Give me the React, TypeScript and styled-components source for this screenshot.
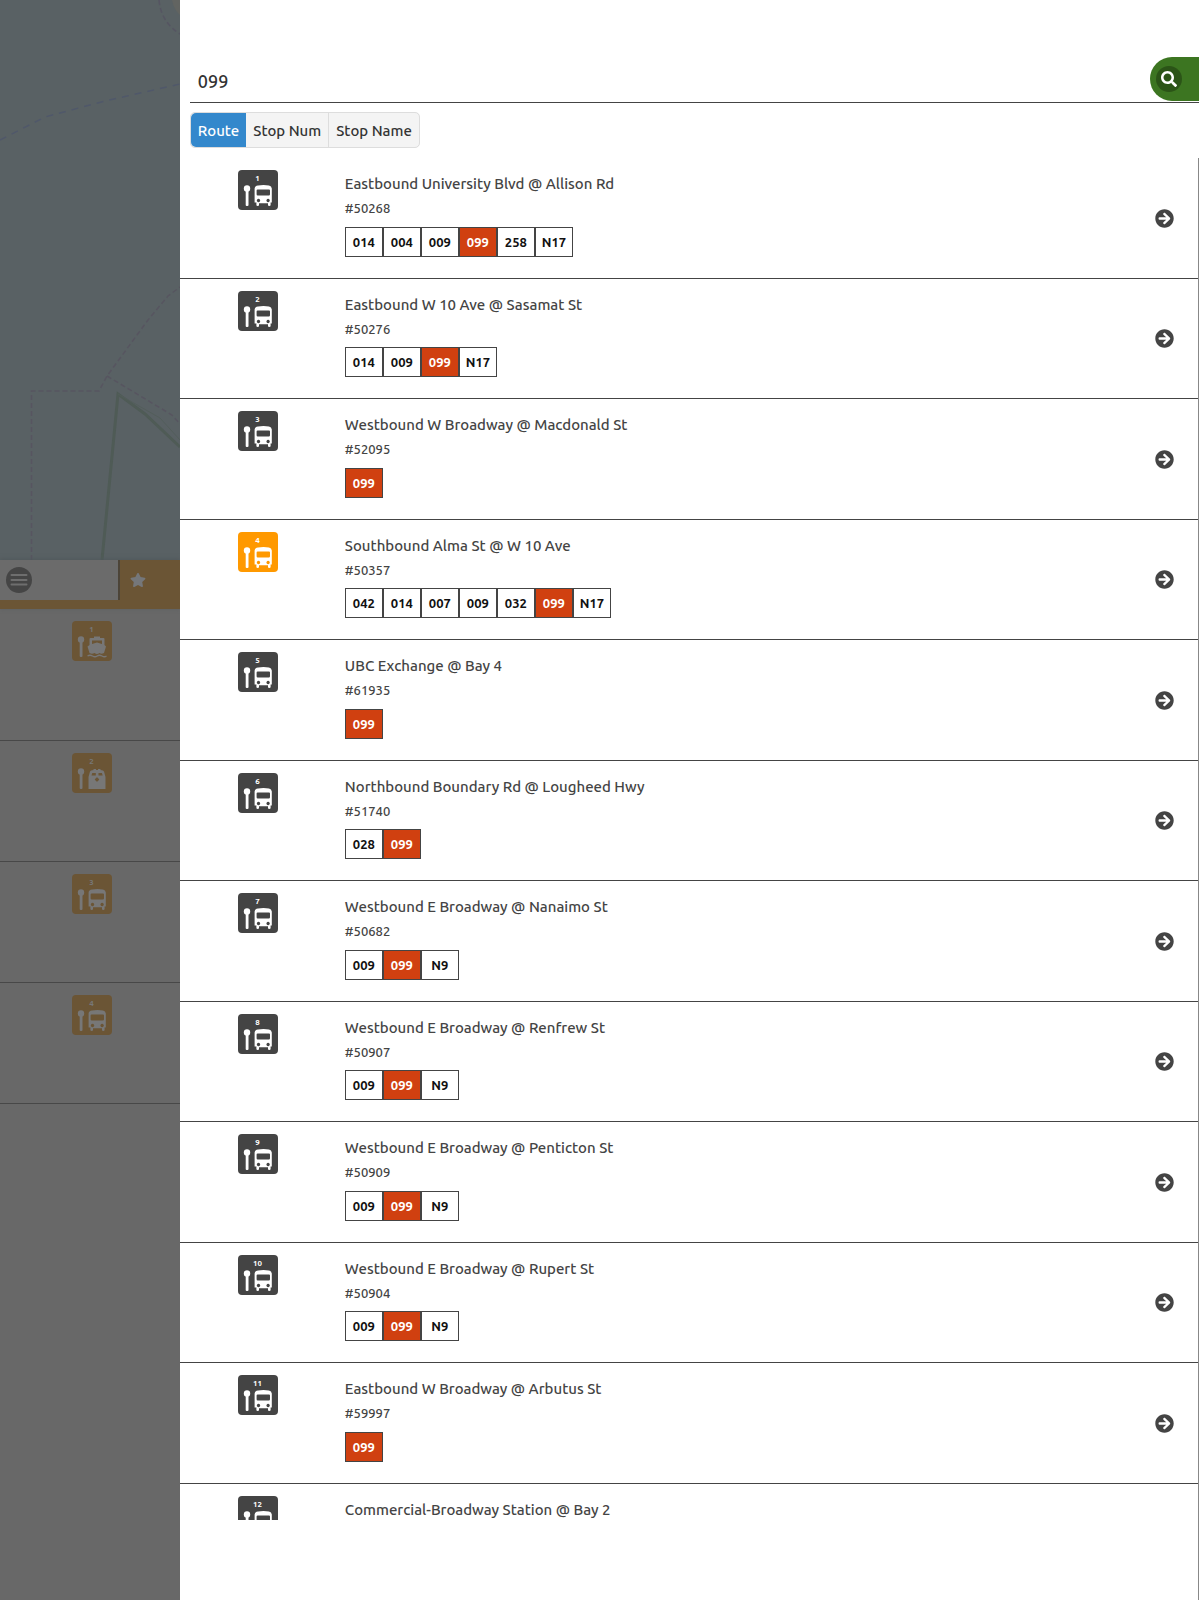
import React, { useState } from "react";
import styled, { createGlobalStyle } from "styled-components";
import { FaArrowCircleRight, FaSearch, FaStar } from "react-icons/fa";

const GlobalStyle = createGlobalStyle`
  *, *::before, *::after { box-sizing: border-box; }
  html, body, #root { height: 100%; }
  body {
    margin: 0;
    background: #fff;
    color: #444;
    font-family: Ubuntu, "Noto Sans", "Open Sans", sans-serif;
    font-weight: 500;
  }
  ul { margin: 0; padding: 0; list-style: none; }
  button, input { font: inherit; }
`;

const Screen = styled.div`
  display: grid;
  grid-template-columns: 15% 1fr;
  grid-template-rows: 100%;
  height: 100vh;
  overflow: hidden;
`;

/* ---------- dimmed favourites behind the search drawer ---------- */

const Backdrop = styled.aside`
  display: flex;
  flex-direction: column;
  min-width: 0;
  overflow: hidden;
  background: #686868;
`;

const MapArea = styled.div`
  flex: 0 0 35%;
  background: #596164;
  overflow: hidden;
`;

const MapDrawing = styled.svg`
  display: block;
`;

const BackdropTabs = styled.nav`
  flex: none;
  display: flex;
  height: 49px;
  border-bottom: 9px solid #6b5535;
  background: #6b5535;
  box-shadow: 0 -1px 4px #50585b;
`;

const MenuTab = styled.button`
  flex: none;
  width: 120px;
  padding: 0 0 0 6px;
  display: flex;
  align-items: center;
  border: 0;
  border-right: 2px solid #4c4438;
  background: #6b6b6b;
`;

const FavouriteTab = styled.button`
  padding: 0 10px;
  border: 0;
  background: transparent;
  color: #75777a;
  line-height: 0;
`;

const FavouriteRow = styled.li<{ $tall?: boolean }>`
  display: flex;
  height: ${(p) => (p.$tall ? 132 : 121)}px;
  padding: 12px 0 0 72px;
  border-bottom: 1px solid #484848;
`;

/* ---------- search drawer ---------- */

const Drawer = styled.main`
  display: flex;
  flex-direction: column;
  min-width: 0;
  min-height: 0;
  padding-top: 57px;
  background: #fff;
`;

const SearchBar = styled.form`
  flex: none;
  display: flex;
  align-items: flex-start;
  height: 46px;
  margin-left: 10px;
  border-bottom: 1px solid #444;
`;

const SearchInput = styled.input`
  flex: 1;
  min-width: 0;
  height: 44px;
  padding: 3px 8px 0;
  border: 0;
  outline: 0;
  background: transparent;
  color: #333;
  font-size: 18px;
`;

const SearchButton = styled.button`
  display: flex;
  align-items: center;
  width: 49px;
  height: 44px;
  padding: 0 6px;
  border: 0;
  border-radius: 22px 0 0 22px;
  background: #3c7521;
  color: #fff;
`;

const SearchBadge = styled.span`
  display: grid;
  place-items: center;
  width: 26px;
  height: 26px;
  border-radius: 50%;
  background: #2b5417;
`;

const Modes = styled.fieldset`
  display: flex;
  align-self: flex-start;
  flex: none;
  height: 36px;
  margin: 9px 0 10px 10px;
  padding: 0;
  border: 1px solid #ddd;
  border-radius: 5px;
  overflow: hidden;
  background: #f4f4f4;
`;

const Mode = styled.label`
  display: flex;
  align-items: center;
  padding: 0 7px;
  color: #333;
  font-size: 15px;
  & + & { border-left: 1px solid #ddd; }
  &:has(input:checked) {
    margin: -1px 0 -1px -1px;
    padding-left: 8px;
    background: #3388cc;
    color: #fff;
  }
  &:has(input:checked) + & { border-left: 0; }
`;

const ModeInput = styled.input`
  appearance: none;
  width: 0;
  height: 0;
  margin: 0;
`;

/* The right rule runs on below the list, which itself stops short of the edge. */
const ResultsFrame = styled.section`
  flex: 1;
  display: flex;
  flex-direction: column;
  min-height: 0;
  padding-bottom: 80px;
  border-right: 1px solid #888;
`;

const Results = styled.ul`
  flex: 1;
  min-height: 0;
  overflow: hidden;
`;

const StopRow = styled.li`
  display: grid;
  grid-template-columns: 157px 1fr auto;
  padding: 12px 24px 21px 0;
  border-bottom: 1px solid #444;
`;

const IconCell = styled.div`
  display: flex;
  justify-content: center;
`;

const StopInfo = styled.div`
  padding: 2px 0 0 8px;
`;

const StopTitle = styled.h2`
  margin: 0;
  color: #444;
  font-size: 15px;
  font-weight: 500;
  line-height: 24px;
`;

const StopNumber = styled.p`
  margin: 3px 0 8px;
  font-size: 13px;
  line-height: 1.5;
`;

const Chips = styled.ul`
  display: flex;
  height: 30px;
`;

const Chip = styled.li<{ $active: boolean }>`
  display: flex;
  align-items: center;
  justify-content: center;
  min-width: 38px;
  padding: 0 6px;
  border: 1px solid #444;
  background: ${(p) => (p.$active ? "#d04010" : "#fff")};
  color: ${(p) => (p.$active ? "#fff" : "#111")};
  font-size: 13px;
  font-weight: 700;
`;

const OpenButton = styled.button`
  align-self: center;
  margin-top: 10px;
  padding: 0;
  border: 0;
  background: transparent;
  color: #444;
  line-height: 0;
`;

const Badge = styled.svg`
  display: block;
  flex: none;
  width: 40px;
  height: 40px;
`;

type Vehicle = "bus" | "train" | "ferry";

function StopBadge({
  n, vehicle = "bus", fill, ink = "#fff",
}: { n: number; vehicle?: Vehicle; fill: string; ink?: string }) {
  return (
    <Badge viewBox="0 0 40 40" aria-hidden="true">
      <rect width="40" height="40" rx="4" fill={fill} />
      <text x="19.5" y="10.5" textAnchor="middle" fontSize="8" fontWeight="700" fill={ink}>{n}</text>
      <circle cx="9" cy="18.5" r="3.2" fill={ink} />
      <rect x="7.7" y="19" width="2.8" height="17" rx="1" fill={ink} />
      {vehicle === "bus" && (
        <path
          fill={ink}
          fillRule="evenodd"
          d="M20 15.6Q25.5 14.6 31 15.6Q33.6 16 33.8 18.5V32.6H32.6V35Q32.6 36 31.3 36Q30 36 30 35V33.3H21V35Q21 36 19.7 36Q18.4 36 18.4 35V32.6H16.6V18.5Q16.8 16 20 15.600ZM19.600 19.600Q18.600 19.600 18.600 20.600V24.200Q18.600 25.400 19.800 25.400H30.800Q32 25.400 32 24.200V20.600Q32 19.600 31 19.600ZM20.500 28.800a1.700 1.700 0 1 0 .01 0ZM30.100 28.800a1.700 1.700 0 1 0 .01 0Z"
        />
      )}
      {vehicle === "train" && (
        <path
          fill={ink}
          fillRule="evenodd"
          d="M16.5 36V24L18 18.5Q18.5 17 21.5 17V16H24V17H26V16H28.5V17Q31.5 17 32 18.5L33.5 24V36ZM20.3 20L19.5 22.5H23.8V20ZM26.5 20V22.5H30.700L29.900 20ZM24.500 24.500L22.700 26.500L24.500 28.500H25.500L27.300 26.500L25.500 24.500Z"
        />
      )}
      {vehicle === "ferry" && (
        <>
          <path
            fill={ink}
            fillRule="evenodd"
            d="M22 17V15.5H28V17H31.5Q32.5 17 32.5 18V24L34 25.5L32 32Q29 33.500 27.500 32Q25 33.800 22.500 32Q20 33.500 17.500 32L15.500 25.500L17.500 24V18Q17.500 17 18.500 17ZM20 19.500V23L25 21.500L30 23V19.500Z"
          />
          <path d="M15.5 35Q18 33.5 20.5 35T25.2 35T30 35T34.5 35" fill="none" stroke={ink} strokeWidth="1.3" />
        </>
      )}
    </Badge>
  );
}

const ACTIVE = "099";

const stops: { title: string; number: string; routes: string[]; saved?: boolean }[] = [
  { title: "Eastbound University Blvd @ Allison Rd", number: "50268", routes: ["014", "004", "009", "099", "258", "N17"] },
  { title: "Eastbound W 10 Ave @ Sasamat St", number: "50276", routes: ["014", "009", "099", "N17"] },
  { title: "Westbound W Broadway @ Macdonald St", number: "52095", routes: ["099"] },
  { title: "Southbound Alma St @ W 10 Ave", number: "50357", routes: ["042", "014", "007", "009", "032", "099", "N17"], saved: true },
  { title: "UBC Exchange @ Bay 4", number: "61935", routes: ["099"] },
  { title: "Northbound Boundary Rd @ Lougheed Hwy", number: "51740", routes: ["028", "099"] },
  { title: "Westbound E Broadway @ Nanaimo St", number: "50682", routes: ["009", "099", "N9"] },
  { title: "Westbound E Broadway @ Renfrew St", number: "50907", routes: ["009", "099", "N9"] },
  { title: "Westbound E Broadway @ Penticton St", number: "50909", routes: ["009", "099", "N9"] },
  { title: "Westbound E Broadway @ Rupert St", number: "50904", routes: ["009", "099", "N9"] },
  { title: "Eastbound W Broadway @ Arbutus St", number: "59997", routes: ["099"] },
  { title: "Commercial-Broadway Station @ Bay 2", number: "", routes: [] },
];

const favourites: Vehicle[] = ["ferry", "train", "bus", "bus"];
const modes = ["Route", "Stop Num", "Stop Name"];

function MapBackground() {
  return (
    <MapArea>
      <MapDrawing width="180" height="560" viewBox="0 0 180 560" fill="none" aria-hidden="true">
        <path d="M172 0Q174 10 180 15V0Z" fill="#626461" />
        <path d="M159 0Q161 22 180 34" stroke="#565562" strokeWidth="1.5" strokeDasharray="5 3" />
        <path d="M0 140L45 117L105 101L180 84" stroke="#50586a" strokeWidth="1.5" strokeDasharray="7 6" />
        <path d="M31.5 560V391H99L107 376L148 320L168 296L180 287M107 376L172 415L180 424" stroke="#575560" strokeWidth="1.5" strokeDasharray="5 3" />
        <path d="M102 560L118 394L145 414L180 447" stroke="#4f5b56" strokeWidth="3" />
        <path d="M118 394L160 418L180 440" stroke="#535e5b" strokeWidth="1" />
      </MapDrawing>
    </MapArea>
  );
}

function MenuIcon() {
  return (
    <svg width="26" height="26" viewBox="0 0 26 26" aria-hidden="true">
      <circle cx="13" cy="13" r="13" fill="#454545" />
      <path d="M5.5 8H20.5M5.5 13H20.5M5.5 17.5H20.5" stroke="#6e6e6e" strokeWidth="2" strokeLinecap="round" />
    </svg>
  );
}

export default function App() {
  const [query, setQuery] = useState("099");
  const [mode, setMode] = useState("Route");

  return (
    <Screen>
      <GlobalStyle />
      <Backdrop>
        <MapBackground />
        <BackdropTabs>
          <MenuTab type="button" aria-label="Menu"><MenuIcon /></MenuTab>
          <FavouriteTab type="button" aria-label="Favourites"><FaStar size={16} /></FavouriteTab>
        </BackdropTabs>
        <ul>
          {favourites.map((vehicle, i) => (
            <FavouriteRow key={i} $tall={i === 0}>
              <StopBadge n={i + 1} vehicle={vehicle} fill="#6b5535" ink="#777" />
            </FavouriteRow>
          ))}
        </ul>
      </Backdrop>

      <Drawer>
        <SearchBar onSubmit={(e) => e.preventDefault()}>
          <SearchInput aria-label="Search stops" value={query} onChange={(e) => setQuery(e.target.value)} />
          <SearchButton type="submit" aria-label="Search">
            <SearchBadge><FaSearch size={16} /></SearchBadge>
          </SearchButton>
        </SearchBar>
        <Modes aria-label="Search by">
          {modes.map((m) => (
            <Mode key={m}>
              <ModeInput type="radio" name="mode" checked={mode === m} onChange={() => setMode(m)} />
              {m}
            </Mode>
          ))}
        </Modes>
        <ResultsFrame>
          <Results>
            {stops.map((stop, i) => (
              <StopRow key={stop.title}>
                <IconCell>
                  <StopBadge n={i + 1} fill={stop.saved ? "#ff9900" : "#444"} />
                </IconCell>
                <StopInfo>
                  <StopTitle>{stop.title}</StopTitle>
                  {stop.number && <StopNumber>#{stop.number}</StopNumber>}
                  <Chips>
                    {stop.routes.map((route) => (
                      <Chip key={route} $active={route === ACTIVE}>{route}</Chip>
                    ))}
                  </Chips>
                </StopInfo>
                {stop.number && (
                  <OpenButton type="button" aria-label={`Open ${stop.title}`}>
                    <FaArrowCircleRight size={19} />
                  </OpenButton>
                )}
              </StopRow>
            ))}
          </Results>
        </ResultsFrame>
      </Drawer>
    </Screen>
  );
}
